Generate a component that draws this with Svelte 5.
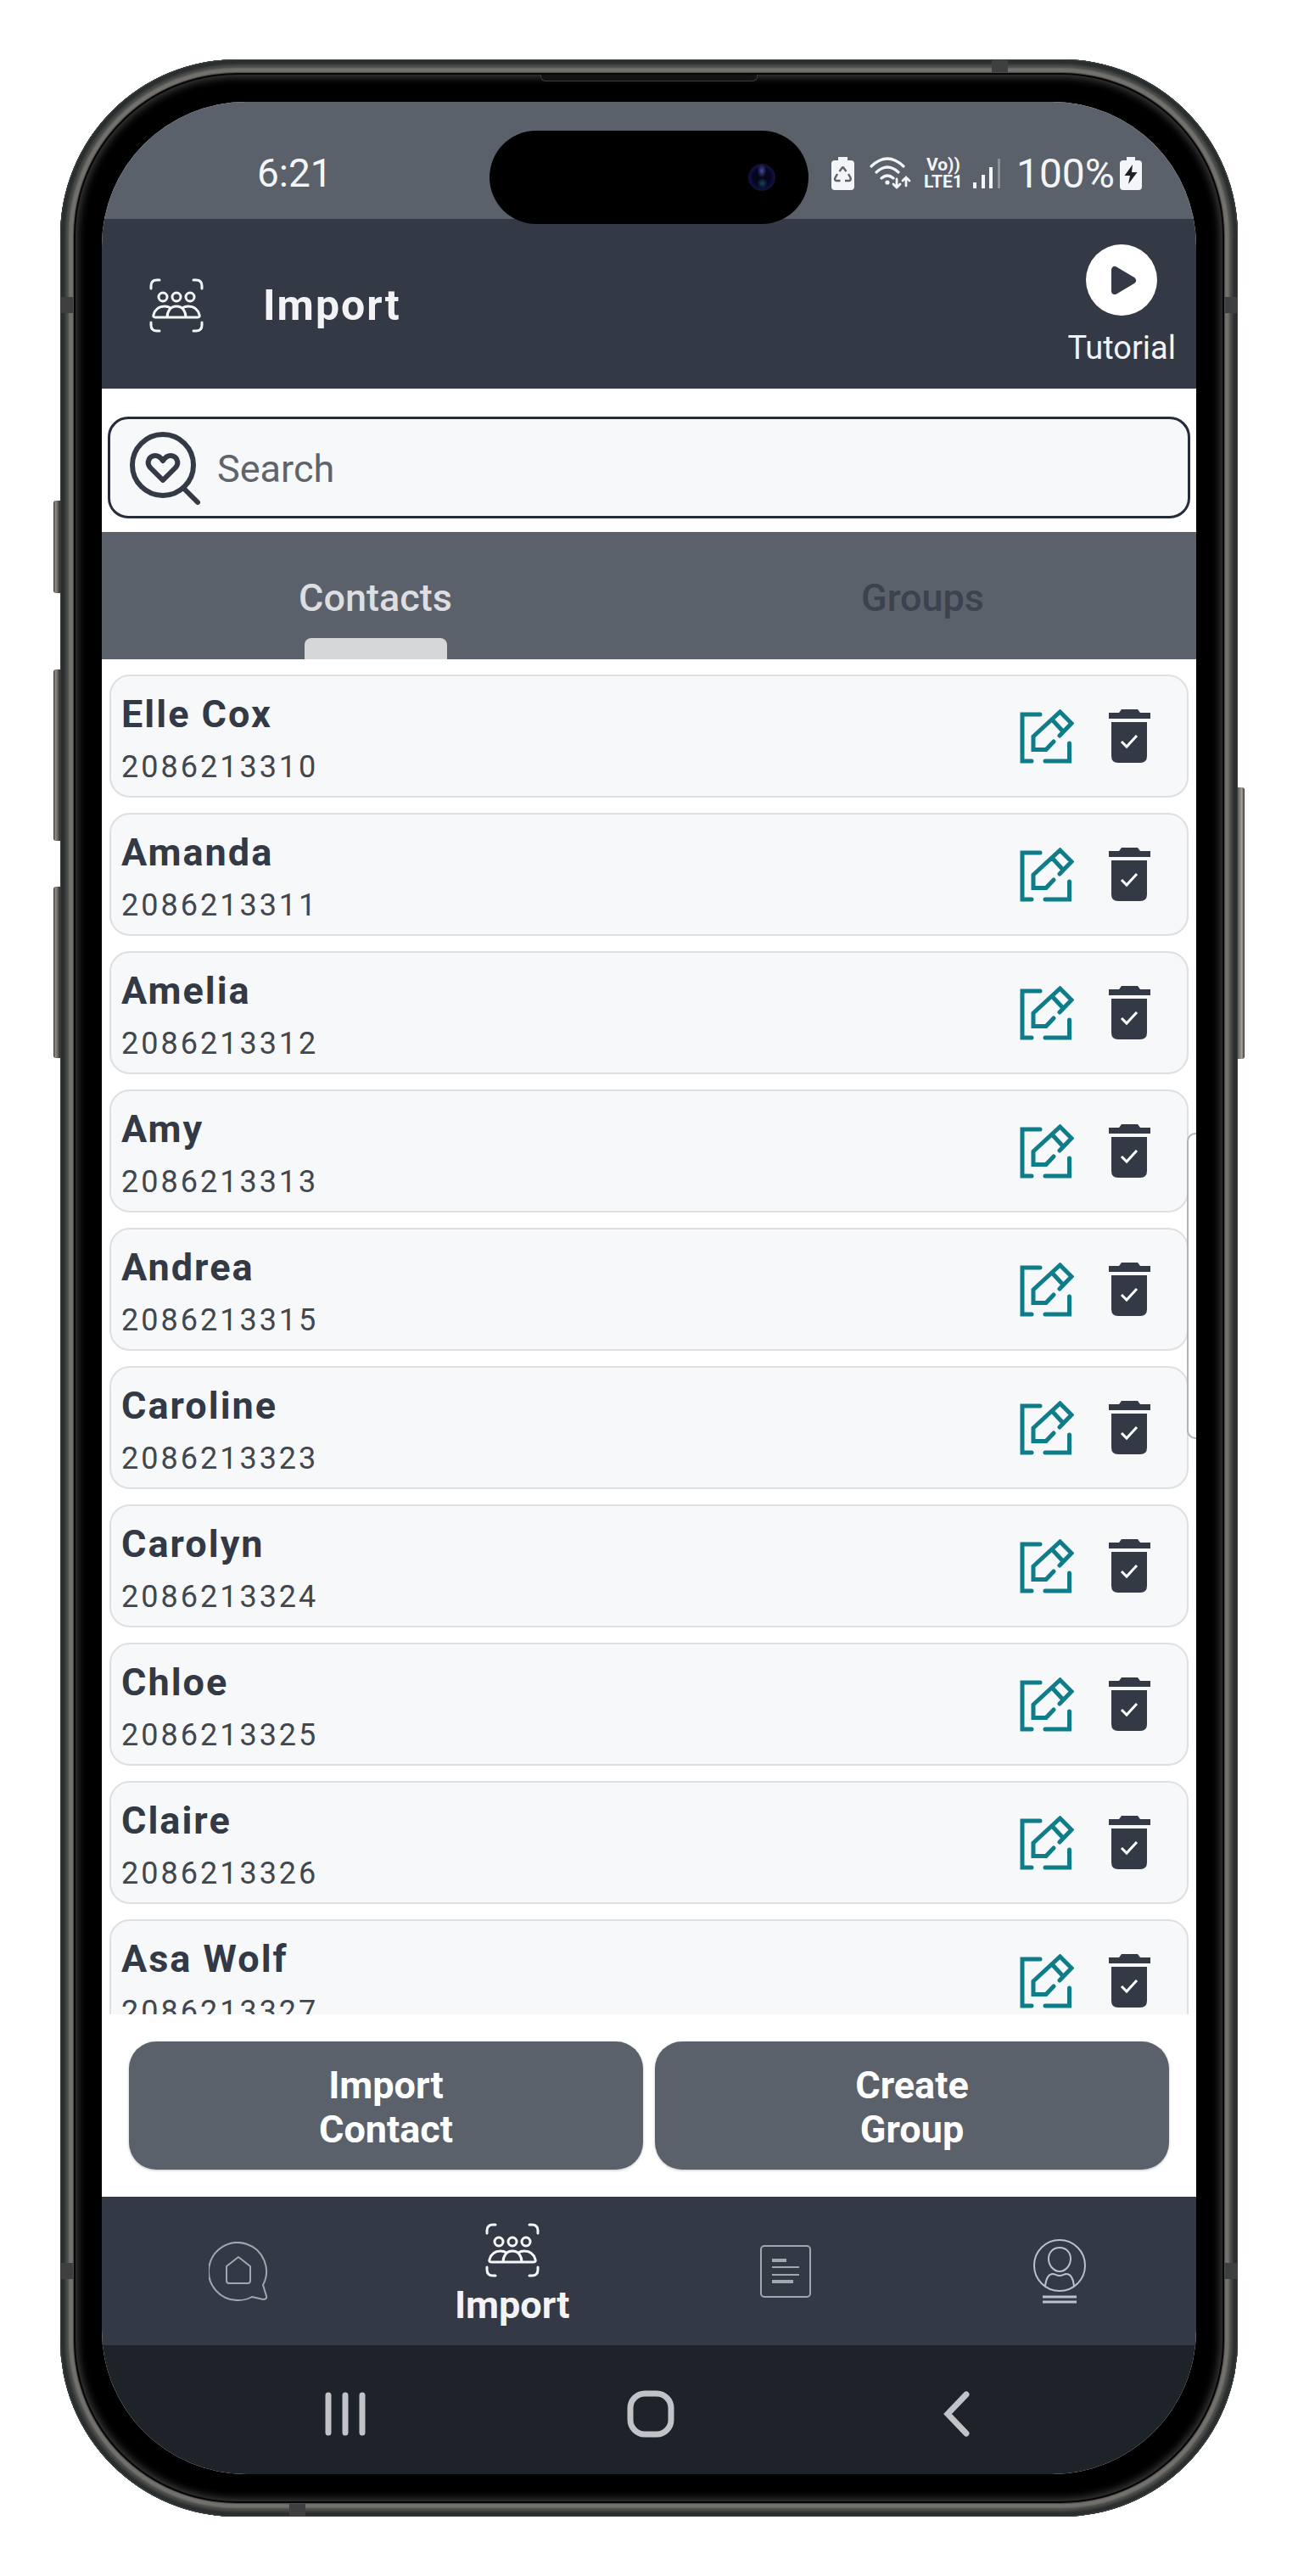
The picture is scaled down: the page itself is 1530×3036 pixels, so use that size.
<script lang="ts">
  interface Contact {
    name: string;
    phone: string;
  }

  const contacts: Contact[] = [
    { name: "Elle Cox", phone: "2086213310" },
    { name: "Amanda", phone: "2086213311" },
    { name: "Amelia", phone: "2086213312" },
    { name: "Amy", phone: "2086213313" },
    { name: "Andrea", phone: "2086213315" },
    { name: "Caroline", phone: "2086213323" },
    { name: "Carolyn", phone: "2086213324" },
    { name: "Chloe", phone: "2086213325" },
    { name: "Claire", phone: "2086213326" },
    { name: "Asa Wolf", phone: "2086213327" },
  ];

  const tabs = ["Contacts", "Groups"];

  let activeTab = $state("Contacts");
  let query = $state("");

  let visible = $derived(
    contacts.filter((c) => c.name.toLowerCase().includes(query.toLowerCase())),
  );
</script>

{#snippet peopleIcon()}
  <svg class="people" viewBox="0 0 64 64" aria-hidden="true">
    <path d="M12 2H9Q2 2 2 9v3M52 2h3q7 0 7 7v3M2 52v3q0 7 7 7h3M62 52v3q0 7-7 7h-3" />
    <circle cx="16" cy="22" r="5" />
    <circle cx="32" cy="22" r="5" />
    <circle cx="48" cy="22" r="5" />
    <path d="M21 46c0-7 4-13 11-13s11 6 11 13zM21 46H7q-3 0-2-3c2-7 7-10 13-10q4 0 7 2M43 46h14q3 0 2-3c-2-7-7-10-13-10q-4 0-7 2" />
  </svg>
{/snippet}

<div class="stage">
  <div class="phone">
    <span class="key action"></span>
    <span class="key volume-up"></span>
    <span class="key volume-down"></span>
    <span class="key power"></span>
    <span class="antenna left upper"></span>
    <span class="antenna left lower"></span>
    <span class="antenna right upper"></span>
    <span class="antenna right lower"></span>
    <span class="antenna top"></span>
    <span class="antenna bottom"></span>
    <span class="speaker"></span>

    <div class="screen">
      <div class="status-bar">
        <span class="clock">6:21</span>
        <div class="indicators">
          <svg class="saver" viewBox="0 0 27 39" aria-hidden="true">
            <path fill="#f3f5f8" d="M8 0h11v4h4q4 0 4 4v27q0 4-4 4H4q-4 0-4-4V8q0-4 4-4h4z" />
            <path fill="none" stroke="#5b616b" stroke-width="2.4" d="M9.500 17l3-4q1-1.500 2 0l3 4M20 20l2.500 4.500q1 3-1.500 3.500h-5M10.500 28H6q-3-.5-1.500-3.500L7 20" />
          </svg>
          <svg class="wifi" viewBox="0 0 50 39" aria-hidden="true">
            <g fill="none" stroke="#f3f5f8" stroke-width="3.200" stroke-linecap="round">
              <path d="M2 11Q21-7 40 11M8 18q13-12 26 0M14 25q7-6 14 0" />
              <path stroke-width="2.800" d="M32 26v10m-4-4 4 4 4-4M43 34V24m-4 4 4-4 4 4" />
            </g>
            <circle cx="21" cy="30" r="2.600" fill="#f3f5f8" />
          </svg>
          <span class="volte"><span>Vo))</span><span>LTE1</span></span>
          <svg class="signal" viewBox="0 0 33 37" aria-hidden="true">
            <path fill="#f3f5f8" d="M0 29h4v7H0zM10 20h4v16h-4zM19 11h4v25h-4z" />
            <path fill="#8d9199" d="M29 1h3v35h-3z" />
          </svg>
          <span class="level">100%</span>
          <svg class="battery" viewBox="0 0 26 39" aria-hidden="true">
            <path fill="#f3f5f8" d="M8 0h10v4h4q4 0 4 4v27q0 4-4 4H4q-4 0-4-4V8q0-4 4-4h4z" />
            <path fill="#1d2026" d="M15 9 5.500 22H12l-2 10 10.500-14H14z" />
          </svg>
        </div>
      </div>

      <header>
        {@render peopleIcon()}
        <h1>Import</h1>
        <button class="tutorial">
          <svg viewBox="0 0 84 84" aria-hidden="true">
            <circle cx="42" cy="42" r="42" fill="#fff" />
            <path fill="#333945" stroke="#333945" stroke-width="8" stroke-linejoin="round" d="M34 30v25l21-12.500z" />
          </svg>
          Tutorial
        </button>
      </header>

      <label class="search">
        <svg viewBox="0 0 90 90" aria-hidden="true">
          <circle cx="42" cy="42" r="36" />
          <path d="M67 70l16 16" />
          <path d="M42 60 27 45c-5-6-1-14 6-14 4 0 7 3 9 6 2-3 5-6 9-6 7 0 11 8 6 14z" />
        </svg>
        <input type="text" placeholder="Search" aria-label="Search" bind:value={query} />
      </label>

      <div class="tabs" role="tablist">
        {#each tabs as tab}
          <button
            role="tab"
            class:active={activeTab === tab}
            aria-selected={activeTab === tab}
            onclick={() => (activeTab = tab)}
          >
            {tab}
          </button>
        {/each}
      </div>

      <ul class="contacts">
        {#each visible as contact (contact.phone)}
          <li>
            <div class="info">
              <span class="name">{contact.name}</span>
              <span class="number">{contact.phone}</span>
            </div>
            <button class="edit" aria-label="Edit {contact.name}">
              <svg viewBox="0 0 64 64" aria-hidden="true">
                <path d="M24 6H3v55h11M30 61h28.500V40M40 38l-9 9.500H16V32L47.500 3 61 16.500 47 31M38 12l13 14" />
              </svg>
            </button>
            <button class="remove" aria-label="Delete {contact.name}">
              <svg viewBox="0 0 49 64" aria-hidden="true">
                <path fill="#333945" d="M0 4h12l3-4h19l3 4h12v7H0zM3 15h42v40q0 8-8 8H11q-8 0-8-8z" />
                <path fill="none" stroke="#fff" stroke-width="3" d="M15 38l6 6 12-13" />
              </svg>
            </button>
          </li>
        {/each}
      </ul>

      <div class="actions">
        <button>Import<br />Contact</button>
        <button>Create<br />Group</button>
      </div>

      <nav class="app-nav">
        <button aria-label="Home">
          <svg class="home" viewBox="0 0 70 70" aria-hidden="true">
            <path d="M64 51A34 34 0 1 0 35 69q9 0 16-4l13 3q5 0 4-4z" />
            <path d="M21 29 35 18l14 11v17q0 3-3 3H24q-3 0-3-3z" />
          </svg>
        </button>
        <button class="current" aria-current="page">
          {@render peopleIcon()}
          Import
        </button>
        <button aria-label="Documents">
          <svg class="document" viewBox="0 0 60 62" aria-hidden="true">
            <rect x="1" y="1" width="58" height="60" rx="4" />
            <path d="M14 26h32M14 35h32" />
            <path stroke-width="4" d="M14 18h17M14 43h25" />
          </svg>
        </button>
        <button aria-label="Profile">
          <svg class="profile" viewBox="0 0 62 76" aria-hidden="true">
            <circle cx="31" cy="31" r="30" />
            <path d="M31 10c8 0 13 6 13 13 0 8-6 15-13 15s-13-7-13-15c0-7 5-13 13-13z" />
            <path d="M14 55c1-8 4-14 9-14 3 0 4 2 8 2s5-2 8-2c5 0 8 6 9 14" />
            <path stroke-width="3" d="M11 68h40M11 74h40" />
          </svg>
        </button>
      </nav>

      <nav class="system-nav">
        <button aria-label="Recent apps">
          <svg viewBox="0 0 56 56" aria-hidden="true">
            <path d="M8 6v44M28 6v44M48 6v44" />
          </svg>
        </button>
        <button aria-label="Home screen">
          <svg viewBox="0 0 56 56" aria-hidden="true">
            <rect x="4" y="4" width="48" height="48" rx="17" />
          </svg>
        </button>
        <button aria-label="Back">
          <svg viewBox="0 0 56 56" aria-hidden="true">
            <path d="M39 5 17 28l22 23" />
          </svg>
        </button>
      </nav>

      <span class="edge-panel"></span>
    </div>

    <div class="island"><span class="lens"></span></div>
  </div>
</div>

<style>
  :global(body) {
    background: #fff;
    font-family: Roboto, "Liberation Sans", sans-serif;
  }

  .stage {
    box-sizing: border-box;
    height: 100vh;
    padding: 70px 71px;
  }

  .phone {
    position: relative;
    box-sizing: border-box;
    height: 100%;
    padding: 50px 49px;
    border-radius: 208px;
    background: #000;
    box-shadow:
      inset 0 0 0 1px #3b3f3f,
      inset 0 0 3px 6px #2a2e2f,
      inset 0 0 2px 10px #4c4d4b,
      inset 0 0 1px 15px #73716d,
      inset 0 0 0 16px #4a4a49,
      inset 0 0 0 18px #050506,
      inset 0 0 10px 21px #3c3c3c;
  }

  .screen {
    position: relative;
    display: flex;
    flex-direction: column;
    height: 100%;
    overflow: hidden;
    border-radius: 170px;
    background: #fff;
  }

  button {
    padding: 0;
    border: none;
    background: none;
    color: inherit;
    font: inherit;
    cursor: pointer;
  }

  svg {
    display: block;
    flex: none;
  }

  /* phone body */
  .key {
    position: absolute;
    left: -8px;
    width: 8px;
    border-radius: 3px 0 0 3px;
    background: linear-gradient(90deg, #33322f, #8f8d87 30%, #5b5a56 70%, #2c2c2a);
  }

  .action {
    top: 520px;
    height: 109px;
  }

  .volume-up {
    top: 719px;
    height: 202px;
  }

  .volume-down {
    top: 975px;
    height: 202px;
  }

  .power {
    top: 858px;
    right: -8px;
    left: auto;
    height: 320px;
    border-radius: 0 3px 3px 0;
    background: linear-gradient(270deg, #33322f, #a5a39c 40%, #5b5a56);
  }

  .antenna {
    position: absolute;
    width: 15px;
    height: 19px;
    background: #3d3f41;
  }

  .left {
    left: 0;
  }

  .right {
    right: 0;
  }

  .upper {
    top: 280px;
  }

  .lower {
    bottom: 280px;
  }

  .top {
    top: 0;
    right: 271px;
    width: 19px;
    height: 15px;
  }

  .bottom {
    bottom: 0;
    left: 270px;
    width: 19px;
    height: 15px;
  }

  .speaker {
    position: absolute;
    top: 18px;
    left: 50%;
    box-sizing: border-box;
    width: 256px;
    height: 8px;
    margin-left: -128px;
    border: 1px solid #3c3c3c;
    border-top: none;
    border-radius: 0 0 6px 6px;
    background: #141414;
  }

  .island {
    position: absolute;
    top: 84px;
    left: 50%;
    display: flex;
    align-items: center;
    justify-content: flex-end;
    box-sizing: border-box;
    width: 376px;
    height: 110px;
    margin-left: -188px;
    padding-right: 39px;
    border-radius: 55px;
    background: #000;
  }

  .lens {
    width: 32px;
    height: 32px;
    border-radius: 50%;
    background:
      radial-gradient(ellipse at 50% 26%, #4a4a9c 0, transparent 24%),
      radial-gradient(circle at 52% 72%, #124a5c 0, transparent 22%),
      radial-gradient(circle, #05051c 45%, #0c0c44 58%, #11142c 68%);
  }

  /* status bar */
  .status-bar {
    display: flex;
    align-items: center;
    justify-content: space-between;
    box-sizing: border-box;
    height: 138px;
    padding: 30px 64px 0 183px;
    background: #5b616b;
    color: #f3f5f8;
    font-size: 46px;
  }

  .indicators {
    display: flex;
    align-items: center;
  }

  .saver {
    width: 27px;
    height: 39px;
    margin-right: 18px;
  }

  .wifi {
    width: 50px;
    height: 39px;
    margin-right: 14px;
  }

  .volte {
    display: flex;
    flex-direction: column;
    align-items: center;
    margin-right: 12px;
    font-size: 21px;
    font-weight: 700;
    line-height: 20px;
  }

  .signal {
    width: 33px;
    height: 37px;
    margin-right: 18px;
  }

  .level {
    font-size: 48px;
  }

  .battery {
    width: 26px;
    height: 39px;
    margin-left: 6px;
  }

  /* header */
  header {
    display: flex;
    align-items: center;
    box-sizing: border-box;
    height: 200px;
    padding: 4px 24px 0 56px;
    background: #333945;
    color: #f3f3f5;
  }

  .people {
    width: 64px;
    height: 64px;
    fill: none;
    stroke: #f6f7f9;
    stroke-width: 3;
    stroke-linecap: round;
    stroke-linejoin: round;
  }

  h1 {
    margin: 0 auto 0 70px;
    font-size: 50px;
    font-weight: 700;
    letter-spacing: 2px;
  }

  .tutorial {
    display: flex;
    flex-direction: column;
    align-items: center;
    gap: 16px;
    font-size: 38px;
    line-height: 44px;
  }

  .tutorial svg {
    width: 84px;
    height: 84px;
  }

  /* search */
  .search {
    display: flex;
    align-items: center;
    gap: 16px;
    box-sizing: border-box;
    height: 120px;
    margin: 33px 7px 16px;
    padding: 0 20px;
    border: 3px solid #262c39;
    border-radius: 24px;
    background: #f6f8fa;
  }

  .search svg {
    width: 90px;
    height: 90px;
    fill: none;
    stroke: #333945;
    stroke-width: 6;
    stroke-linecap: round;
    stroke-linejoin: round;
  }

  .search input {
    flex: 1;
    min-width: 0;
    padding: 2px 0 0;
    border: none;
    outline: none;
    background: none;
    color: #333945;
    font: inherit;
    font-size: 45px;
  }

  .search input::placeholder {
    color: #5f646b;
    opacity: 1;
  }

  /* tabs */
  .tabs {
    display: grid;
    grid-template-columns: 1fr 1fr;
    height: 150px;
    background: #5b616b;
  }

  .tabs button {
    position: relative;
    padding-top: 4px;
    color: #3c424e;
    font-size: 45px;
    font-weight: 500;
  }

  .tabs .active {
    color: #dcdee1;
  }

  .tabs .active::after {
    content: "";
    position: absolute;
    bottom: 0;
    left: 50%;
    width: 168px;
    height: 25px;
    margin-left: -84px;
    border-radius: 8px 8px 0 0;
    background: #d6d7d8;
  }

  /* contacts */
  .contacts {
    display: flex;
    flex: 1;
    flex-direction: column;
    gap: 18px;
    min-height: 0;
    margin: 0;
    padding: 18px 9px;
    overflow-y: auto;
    scrollbar-width: none;
    list-style: none;
  }

  li {
    display: flex;
    flex: none;
    align-items: center;
    box-sizing: border-box;
    height: 145px;
    padding: 0 43px 0 12px;
    border: 2px solid #dddfe2;
    border-radius: 24px;
    background: #f6f8fa;
  }

  .info {
    display: flex;
    flex: 1;
    flex-direction: column;
    padding-top: 10px;
    line-height: 63px;
  }

  .name {
    color: #333945;
    font-size: 45px;
    font-weight: 700;
    letter-spacing: 2px;
  }

  .number {
    color: #42474e;
    font-size: 36px;
    letter-spacing: 3px;
  }

  .edit {
    margin-right: 41px;
  }

  .edit svg {
    width: 64px;
    height: 64px;
    fill: none;
    stroke: #0f7c8a;
    stroke-width: 5;
    stroke-linecap: round;
  }

  .remove svg {
    width: 49px;
    height: 64px;
  }

  /* bottom buttons */
  .actions {
    display: grid;
    grid-template-columns: 1fr 1fr;
    gap: 14px;
    padding: 32px;
  }

  .actions button {
    height: 151px;
    padding-top: 4px;
    border-radius: 32px;
    background: #5b616b;
    box-shadow: 0 1px 3px rgba(40, 45, 60, 0.3);
    color: #fff;
    font-size: 45px;
    font-weight: 700;
    line-height: 52px;
  }

  /* navigation */
  .app-nav {
    display: grid;
    grid-template-columns: repeat(4, 1fr);
    height: 175px;
    background: #333945;
    color: #f3f3f5;
  }

  .app-nav button {
    display: flex;
    flex-direction: column;
    align-items: center;
    justify-content: center;
    gap: 7px;
    font-size: 45px;
    font-weight: 700;
    line-height: 52px;
  }

  .app-nav .current {
    padding-top: 10px;
  }

  .home,
  .document,
  .profile {
    fill: none;
    stroke: #a1a6b0;
    stroke-width: 2;
    stroke-linejoin: round;
  }

  .home {
    width: 70px;
    height: 70px;
  }

  .document {
    width: 60px;
    height: 62px;
  }

  .profile {
    width: 62px;
    height: 76px;
    stroke: #bcc0cc;
  }

  .system-nav {
    display: grid;
    grid-template-columns: repeat(3, 1fr);
    box-sizing: border-box;
    height: 152px;
    padding: 10px 102px 0 107px;
    background: #1e2229;
  }

  .system-nav button {
    display: flex;
    align-items: center;
    justify-content: center;
  }

  .system-nav svg {
    width: 56px;
    height: 56px;
    fill: none;
    stroke: #c2c3c6;
    stroke-width: 7;
    stroke-linecap: round;
  }

  .edge-panel {
    position: absolute;
    top: 1215px;
    right: 0;
    box-sizing: border-box;
    width: 11px;
    height: 361px;
    border: 2px solid #b2b3b5;
    border-right: none;
    border-radius: 10px 0 0 10px;
    background: #fff;
  }
</style>
